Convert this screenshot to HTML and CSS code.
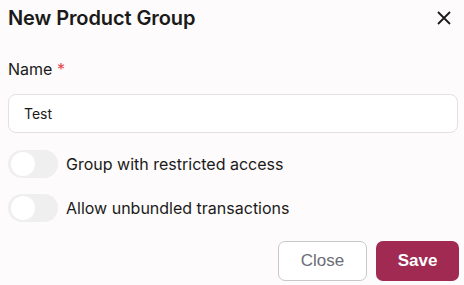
FILE: index.html
```html
<!DOCTYPE html>
<html>
<head>
<meta charset="utf-8">
<link rel="stylesheet" href="styles.css">
</head>
<body>
<div class="dialog">
  <div class="header">
    <h1 class="title">New Product Group</h1>
    <button class="close-x" aria-label="Close">
      <svg width="16" height="16" viewBox="0 0 16 16"><path d="M2 2L14 14M14 2L2 14" stroke="#1a1a1a" stroke-width="1.8" fill="none"/></svg>
    </button>
  </div>
  <label class="label">Name <span class="req">*</span></label>
  <div class="input">Test</div>
  <div class="toggle-row"><span class="toggle"><span class="knob"></span></span><span class="toggle-text">Group with restricted access</span></div>
  <div class="toggle-row"><span class="toggle"><span class="knob"></span></span><span class="toggle-text">Allow unbundled transactions</span></div>
  <div class="actions">
    <button class="btn btn-close">Close</button>
    <button class="btn btn-save">Save</button>
  </div>
</div>
</body>
</html>
```
FILE: styles.css
```css
html, body { margin: 0; padding: 0; }
body { background: #fdfbfb; font-family: Inter, "Liberation Sans", sans-serif; color: #1a1a1a; }
.dialog { padding: 6px 5px 0 8px; display: flex; flex-direction: column; }
.header { display: flex; justify-content: space-between; align-items: center; height: 24px; }
.title { margin: 0; font-size: 20px; font-weight: 600; letter-spacing: -0.1px; }
.close-x { background: none; border: 0; padding: 0; margin-right: 7px; width: 16px; height: 16px; display: flex; }
.label { margin-top: 30px; font-size: 16px; font-weight: 400; line-height: 18px; }
.req { color: #e5484d; }
.input { margin-top: 16px; height: 37px; border: 1px solid #e2e2e4; border-radius: 8px; background: #fff; display: flex; align-items: center; padding-left: 15px; font-size: 14px; margin-right: 1px; }
.toggle-row { display: flex; align-items: center; gap: 8px; margin-top: 17px; }
.toggle-row + .toggle-row { margin-top: 16px; }
.toggle { width: 50px; height: 28px; border-radius: 14px; background: #efefef; display: flex; align-items: center; padding-left: 3px; box-sizing: border-box; }
.knob { width: 24px; height: 24px; border-radius: 50%; background: #fff; }
.toggle-text { font-size: 16px; font-weight: 400; }
.actions { display: flex; justify-content: flex-end; gap: 9px; margin-top: 19px; }
.btn { height: 40px; border-radius: 7px; font-family: "Liberation Sans", Arial, sans-serif; font-size: 17px; }
.btn-close { width: 89px; background: #fff; border: 1px solid #c8c8cc; color: #6b6b76; }
.btn-save { width: 83px; background: #a02a52; border: 0; color: #fff; font-weight: bold; }
```
